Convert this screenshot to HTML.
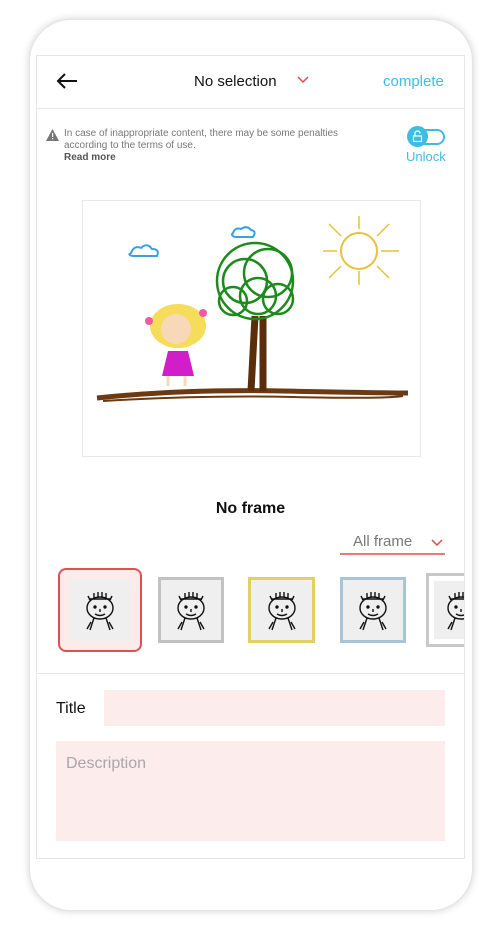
<!DOCTYPE html>
<html><head><style>
*{margin:0;padding:0;box-sizing:border-box}
body{width:500px;height:930px;background:#fff;font-family:"Liberation Sans",sans-serif;position:relative;overflow:hidden}
.phone{position:absolute;left:29px;top:19px;width:444px;height:892px;border-radius:42px;background:#fff;box-shadow:0 0 8px rgba(0,0,0,.18);border:1px solid #e4e4e4}
.screen{position:absolute;left:36px;top:55px;width:429px;height:804px;border:1px solid #e6e6e6;overflow:hidden}
.a{position:absolute}
</style></head><body>
<div class="phone"></div>
<div class="screen">
 <svg class="a" style="left:18px;top:16px" width="24" height="18" viewBox="0 0 24 18"><path d="M22 9H3M10 2L3 9l7 7" stroke="#111" stroke-width="2" fill="none"/></svg>
 <div class="a" style="left:157px;top:17px;font-size:15px;color:#111">No selection</div>
 <svg class="a" style="left:260px;top:20px" width="12" height="8"><path d="M1 1l5 5 5-5" stroke="#e04848" stroke-width="1.5" fill="none"/></svg>
 <div class="a" style="left:346px;top:17px;font-size:15px;color:#3fbde0">complete</div>
 <div class="a" style="left:0;top:52px;width:100%;height:1px;background:#e8e8e8"></div>
 <svg class="a" style="left:9px;top:73px" width="13" height="12"><path d="M6.5 0L13 12H0z" fill="#777"/><rect x="6" y="4" width="1.2" height="4" fill="#fff"/><rect x="6" y="9" width="1.2" height="1.3" fill="#fff"/></svg>
 <div class="a" style="left:27px;top:72px;font-size:10px;line-height:12px;color:#777;width:300px">In case of inappropriate content, there may be some penalties according to the terms of use.<br><b style="color:#555">Read more</b></div>
 <div class="a" style="left:377px;top:73px;width:31px;height:16px;border:2px solid #3fbde0;border-radius:9px"></div>
 <div class="a" style="left:370px;top:70px;width:21px;height:21px;background:#3fbde0;border-radius:50%"></div>
 <svg class="a" style="left:375px;top:74px" width="11" height="12"><path d="M3 6V3.5a2.5 2.5 0 0 1 5 0" stroke="#fff" stroke-width="1.2" fill="none"/><rect x="1.5" y="6" width="8" height="5.5" fill="none" stroke="#fff" stroke-width="1.2"/></svg>
 <div class="a" style="left:369px;top:93px;font-size:13px;color:#3fbde0">Unlock</div>
 <div class="a" style="left:45px;top:144px;width:339px;height:257px;border:1px solid #e8e8e8;background:#fff">
  <svg width="337" height="255" viewBox="0 0 337 255">
   <path d="M14 197 Q100 188 200 190 T325 192" stroke="#6b3a12" stroke-width="5" fill="none"/>
   <path d="M20 200 Q120 194 210 196 T320 195" stroke="#6b3a12" stroke-width="2" fill="none"/>
   <path d="M168 190 L172 115 M180 190 L180 115" stroke="#5a2e0c" stroke-width="7"/>
   <g fill="none" stroke="#1d8a1d" stroke-width="2.5"><circle cx="172" cy="80" r="38"/><circle cx="162" cy="80" r="22"/><circle cx="185" cy="72" r="24"/><circle cx="175" cy="95" r="18"/><circle cx="150" cy="100" r="14"/><circle cx="195" cy="98" r="15"/></g>
   <g transform="translate(14,0)"><circle cx="262" cy="50" r="18" fill="none" stroke="#e8c23a" stroke-width="2"/>
   <g stroke="#e8c23a" stroke-width="1.5"><path d="M262 28V15M280 35l12-12M284 50h18M280 65l12 12M262 70v14M244 65l-12 12M240 50h-14M244 35l-12-12"/></g></g>
   <path d="M48 52 q3-8 10-5 q6-6 11 1 q8 0 5 7 h-24 q-6-1-2-3z" fill="none" stroke="#3aa0e0" stroke-width="2"/>
   <path d="M150 32 q2-6 8-4 q6-4 10 1 q6 1 2 7 h-18 q-5-2-2-4z" fill="none" stroke="#3aa0e0" stroke-width="2"/>
   <ellipse cx="95" cy="125" rx="28" ry="22" fill="#f5dc5a"/>
   <circle cx="93" cy="128" r="15" fill="#f7d9b8"/>
   <path d="M85 150h20l6 25h-32z" fill="#d21ec8"/>
   <path d="M85 175v10M102 175v10" stroke="#f7d9b8" stroke-width="3"/>
   <circle cx="66" cy="120" r="4" fill="#f05aa0"/><circle cx="120" cy="112" r="4" fill="#f05aa0"/>
  </svg>
 </div>
 <div class="a" style="left:0;top:444px;width:100%;text-align:center;font-size:16px;font-weight:bold;color:#111">No frame</div>
 <div class="a" style="left:316px;top:477px;font-size:15px;color:#777">All frame</div>
 <svg class="a" style="left:394px;top:483px" width="12" height="8"><path d="M1 1l5 5 5-5" stroke="#e04848" stroke-width="1.5" fill="none"/></svg>
 <div class="a" style="left:303px;top:497px;width:105px;height:2px;background:#e87a7a"></div>
 <div class="a" style="left:21px;top:512px;width:84px;height:84px;border:2px solid #e05050;border-radius:8px;background:#fdeaea"><div class="a" style="left:9px;top:9px;width:62px;height:62px;background:#efefef"></div></div>
 <div class="a" style="left:121px;top:521px;width:66px;height:66px;border:3px solid #c2c2c2;background:#efefef"></div>
 <div class="a" style="left:211px;top:521px;width:67px;height:66px;border:3px solid #e2d060;background:#efefef"></div>
 <div class="a" style="left:303px;top:521px;width:66px;height:66px;border:3px solid #a9c4d6;background:#efefef"></div>
 <div class="a" style="left:389px;top:517px;width:70px;height:74px;border:3px solid #c8c8c8;background:#fff"><div class="a" style="left:5px;top:5px;width:60px;height:58px;background:#efefef"></div></div>
 <svg class="a" style="left:0;top:0;pointer-events:none" width="429" height="700">
  <defs><g id="f" fill="none" stroke="#111" stroke-width="1.4"><ellipse cx="0" cy="0" rx="13" ry="11"/><path d="M-10-8l-2-4M-6-10v-5M-2-11v-5M2-11v-5M6-10v-5M10-8l2-4M-10-9h20"/><circle cx="-5" cy="-1" r="1" fill="#111"/><circle cx="5" cy="-1" r="1" fill="#111"/><path d="M0 1v3M-5 6q5 3 10 0M-6 10l-4 12M6 10l4 12M-9 14l-4 7M9 14l4 7"/></g></defs>
  <use href="#f" x="63" y="552"/><use href="#f" x="154" y="552"/><use href="#f" x="245" y="552"/><use href="#f" x="336" y="552"/><use href="#f" x="424" y="552"/>
 </svg>
 <div class="a" style="left:0;top:617px;width:100%;height:1px;background:#e8e8e8"></div>
 <div class="a" style="left:19px;top:644px;font-size:16px;color:#111">Title</div>
 <div class="a" style="left:67px;top:634px;width:341px;height:36px;background:#fdecec"></div>
 <div class="a" style="left:19px;top:685px;width:389px;height:100px;background:#fdecec"><div style="padding:14px 10px;font-size:16px;color:#a8a8a8">Description</div></div>
</div>
</body></html>
